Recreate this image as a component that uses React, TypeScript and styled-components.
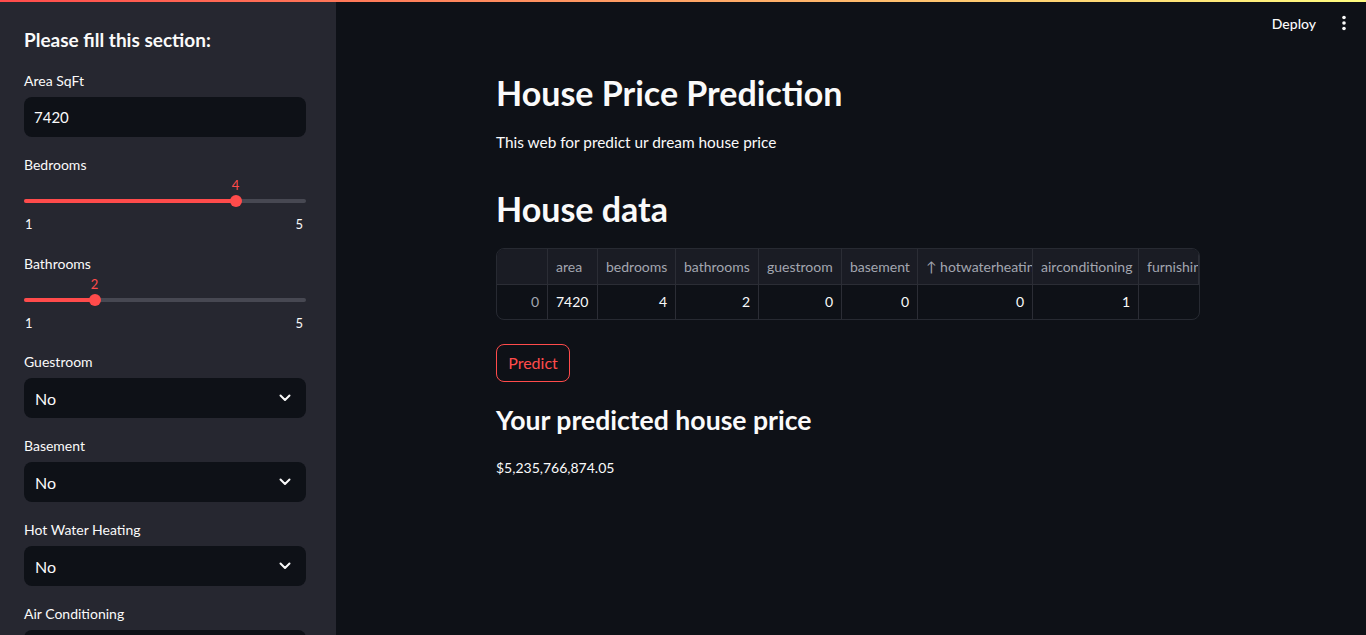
import React from "react";
import styled, { createGlobalStyle } from "styled-components";

const GlobalStyle = createGlobalStyle`
  html, body { margin: 0; padding: 0; background: #0e1117; }
  body {
    font-family: Lato, "Noto Sans", "Liberation Sans", sans-serif;
    color: #fafafa;
    overflow: hidden;
  }
  * { box-sizing: border-box; }
`;

const Page = styled.div`
  width: 1366px;
  height: 635px;
  display: flex;
  flex-direction: column;
  background: #0e1117;
  overflow: hidden;
`;

const Decoration = styled.div`
  height: 2px;
  flex: none;
  background: linear-gradient(90deg, #ff4b4b, #fffd80);
`;

const Layout = styled.div`
  flex: 1;
  display: flex;
  min-height: 0;
`;

const Sidebar = styled.aside`
  width: 336px;
  flex: none;
  background: #262730;
  padding: 26px 30px 0 24px;
  display: flex;
  flex-direction: column;
  gap: 18px;
  overflow: hidden;
`;

const SidebarTitle = styled.h2`
  margin: 0 0 1px;
  font-size: 19px;
  line-height: 24px;
  font-weight: 700;
  color: #fafafa;
`;

const Field = styled.div`
  display: flex;
  flex-direction: column;
  gap: 6px;
`;

const FieldLabel = styled.label`
  font-size: 14px;
  line-height: 20px;
  color: #fafafa;
`;

const TextBox = styled.div`
  height: 40px;
  border-radius: 8px;
  background: #0e1117;
  display: flex;
  align-items: center;
  padding: 0 10px;
  font-size: 15px;
  color: #fafafa;
`;

const SelectBox = styled.div`
  height: 40px;
  border-radius: 8px;
  background: #0e1117;
  display: flex;
  align-items: center;
  justify-content: space-between;
  padding: 0 15px 0 11px;
  font-size: 16px;
  color: #fafafa;
`;

const SliderField = styled.div`
  display: flex;
  flex-direction: column;
  margin-top: -6px;
  padding-bottom: 1.5px;
`;

const SliderValueArea = styled.div`
  position: relative;
  height: 20px;
`;

const SliderValue = styled.span`
  position: absolute;
  top: 3px;
  transform: translateX(-50%);
  font-size: 13px;
  line-height: 14px;
  color: #ff4b4b;
`;

const TrackArea = styled.div`
  position: relative;
  height: 12px;
  display: flex;
  align-items: center;
`;

const Track = styled.div`
  width: 100%;
  height: 4px;
  border-radius: 2px;
  background: #474852;
  overflow: hidden;
`;

const TrackFill = styled.div`
  height: 100%;
  background: #ff4b4b;
`;

const Thumb = styled.div`
  position: absolute;
  top: 0;
  width: 12px;
  height: 12px;
  border-radius: 50%;
  background: #ff4b4b;
  transform: translateX(-50%);
`;

const TickRow = styled.div`
  margin-top: 7px;
  display: flex;
  justify-content: space-between;
  font-size: 13px;
  line-height: 20px;
  color: #fafafa;
  padding: 0 3px 0 1px;
`;

const Main = styled.main`
  flex: 1;
  display: flex;
  flex-direction: column;
  min-width: 0;
`;

const Header = styled.header`
  height: 42px;
  display: flex;
  align-items: center;
  justify-content: flex-end;
  gap: 25px;
  padding-right: 19px;
`;

const DeployButton = styled.span`
  font-size: 14px;
  font-weight: 500;
  color: #fafafa;
`;

const MenuButton = styled.span`
  display: flex;
  align-items: center;
`;

const Content = styled.div`
  width: 704px;
  margin-left: 160px;
  display: flex;
  flex-direction: column;
`;

const Title = styled.h1`
  margin: 28.5px 0 0;
  font-size: 34px;
  line-height: 1.2;
  font-weight: 700;
  color: #fafafa;
`;

const Subtitle = styled.p`
  margin: 17px 0 0;
  font-size: 15.4px;
  line-height: 24px;
  color: #fafafa;
`;

const SectionTitle = styled.h2`
  margin: 34.5px 0 0;
  font-size: 34px;
  line-height: 1.2;
  font-weight: 700;
  color: #fafafa;
`;

const Table = styled.div`
  margin-top: 18px;
  width: 704px;
  border: 1px solid #272a32;
  border-radius: 8px;
  overflow: hidden;
  display: grid;
  grid-template-columns: 51px 50px 78px 83px 83px 76px 115px 106px 1fr;
  font-size: 14px;
`;

const HeadCell = styled.div`
  height: 36px;
  background: #1a1c24;
  border-right: 1px solid #2b2d35;
  border-bottom: 1px solid #2b2d35;
  display: flex;
  align-items: center;
  padding: 0 8px;
  color: #a3a6b0;
  white-space: nowrap;
  overflow: hidden;
  &:last-child { border-right: none; }
`;

const Cell = styled.div<{ $align?: "left" | "right"; $muted?: boolean }>`
  height: 34px;
  border-right: 1px solid #2b2d35;
  display: flex;
  align-items: center;
  justify-content: ${(p) => (p.$align === "left" ? "flex-start" : "flex-end")};
  padding: 0 8px;
  color: ${(p) => (p.$muted ? "#a3a6b0" : "#fafafa")};
  white-space: nowrap;
  overflow: hidden;
  &:last-child { border-right: none; }
`;

const PredictButton = styled.button`
  margin-top: 24px;
  align-self: flex-start;
  height: 38px;
  width: 74px;
  border: 1px solid #ff4b4b;
  border-radius: 8px;
  background: transparent;
  color: #ff4b4b;
  font-family: inherit;
  font-size: 16px;
  padding: 0;
`;

const ResultTitle = styled.h3`
  margin: 23px 0 0;
  font-size: 26.6px;
  line-height: 1.2;
  font-weight: 700;
  color: #fafafa;
`;

const Price = styled.p`
  margin: 21px 0 0;
  font-size: 14px;
  line-height: 20px;
  color: #fafafa;
`;

const Chevron = () => (
  <svg width="12" height="8" viewBox="0 0 12 8">
    <path d="M1.5 1.5 L6 6 L10.5 1.5" stroke="#fafafa" strokeWidth="2" fill="none" strokeLinecap="round" strokeLinejoin="round" />
  </svg>
);

const KebabIcon = () => (
  <svg width="6" height="16" viewBox="0 0 6 16">
    <circle cx="3" cy="2.5" r="1.8" fill="#fafafa" />
    <circle cx="3" cy="8" r="1.8" fill="#fafafa" />
    <circle cx="3" cy="13.5" r="1.8" fill="#fafafa" />
  </svg>
);

const Slider = ({ label, value, min, max }: { label: string; value: number; min: number; max: number }) => {
  const pct = ((value - min) / (max - min)) * 100;
  return (
    <Field>
      <FieldLabel>{label}</FieldLabel>
      <SliderField>
        <SliderValueArea>
          <SliderValue style={{ left: `${pct}%` }}>{value}</SliderValue>
        </SliderValueArea>
        <TrackArea>
          <Track>
            <TrackFill style={{ width: `${pct}%` }} />
          </Track>
          <Thumb style={{ left: `${pct}%` }} />
        </TrackArea>
        <TickRow>
          <span>{min}</span>
          <span>{max}</span>
        </TickRow>
      </SliderField>
    </Field>
  );
};

const Select = ({ label, value }: { label: string; value: string }) => (
  <Field>
    <FieldLabel>{label}</FieldLabel>
    <SelectBox>
      <span>{value}</span>
      <Chevron />
    </SelectBox>
  </Field>
);

const headers = ["", "area", "bedrooms", "bathrooms", "guestroom", "basement", "↑ hotwaterheating", "airconditioning", "furnishing"];
const row: { v: string; align: "left" | "right"; muted?: boolean }[] = [
  { v: "0", align: "right", muted: true },
  { v: "7420", align: "left" },
  { v: "4", align: "right" },
  { v: "2", align: "right" },
  { v: "0", align: "right" },
  { v: "0", align: "right" },
  { v: "0", align: "right" },
  { v: "1", align: "right" },
  { v: "", align: "right" },
];

export default function App() {
  return (
    <Page>
      <GlobalStyle />
      <Decoration />
      <Layout>
        <Sidebar>
          <SidebarTitle>Please fill this section:</SidebarTitle>
          <Field>
            <FieldLabel>Area SqFt</FieldLabel>
            <TextBox>7420</TextBox>
          </Field>
          <Slider label="Bedrooms" value={4} min={1} max={5} />
          <Slider label="Bathrooms" value={2} min={1} max={5} />
          <Select label="Guestroom" value="No" />
          <Select label="Basement" value="No" />
          <Select label="Hot Water Heating" value="No" />
          <Select label="Air Conditioning" value="No" />
        </Sidebar>
        <Main>
          <Header>
            <DeployButton>Deploy</DeployButton>
            <MenuButton>
              <KebabIcon />
            </MenuButton>
          </Header>
          <Content>
            <Title>House Price Prediction</Title>
            <Subtitle>This web for predict ur dream house price</Subtitle>
            <SectionTitle>House data</SectionTitle>
            <Table>
              {headers.map((h, i) => (
                <HeadCell key={`h${i}`}>{h}</HeadCell>
              ))}
              {row.map((c, i) => (
                <Cell key={`c${i}`} $align={c.align} $muted={c.muted}>
                  {c.v}
                </Cell>
              ))}
            </Table>
            <PredictButton>Predict</PredictButton>
            <ResultTitle>Your predicted house price</ResultTitle>
            <Price>$5,235,766,874.05</Price>
          </Content>
        </Main>
      </Layout>
    </Page>
  );
}
